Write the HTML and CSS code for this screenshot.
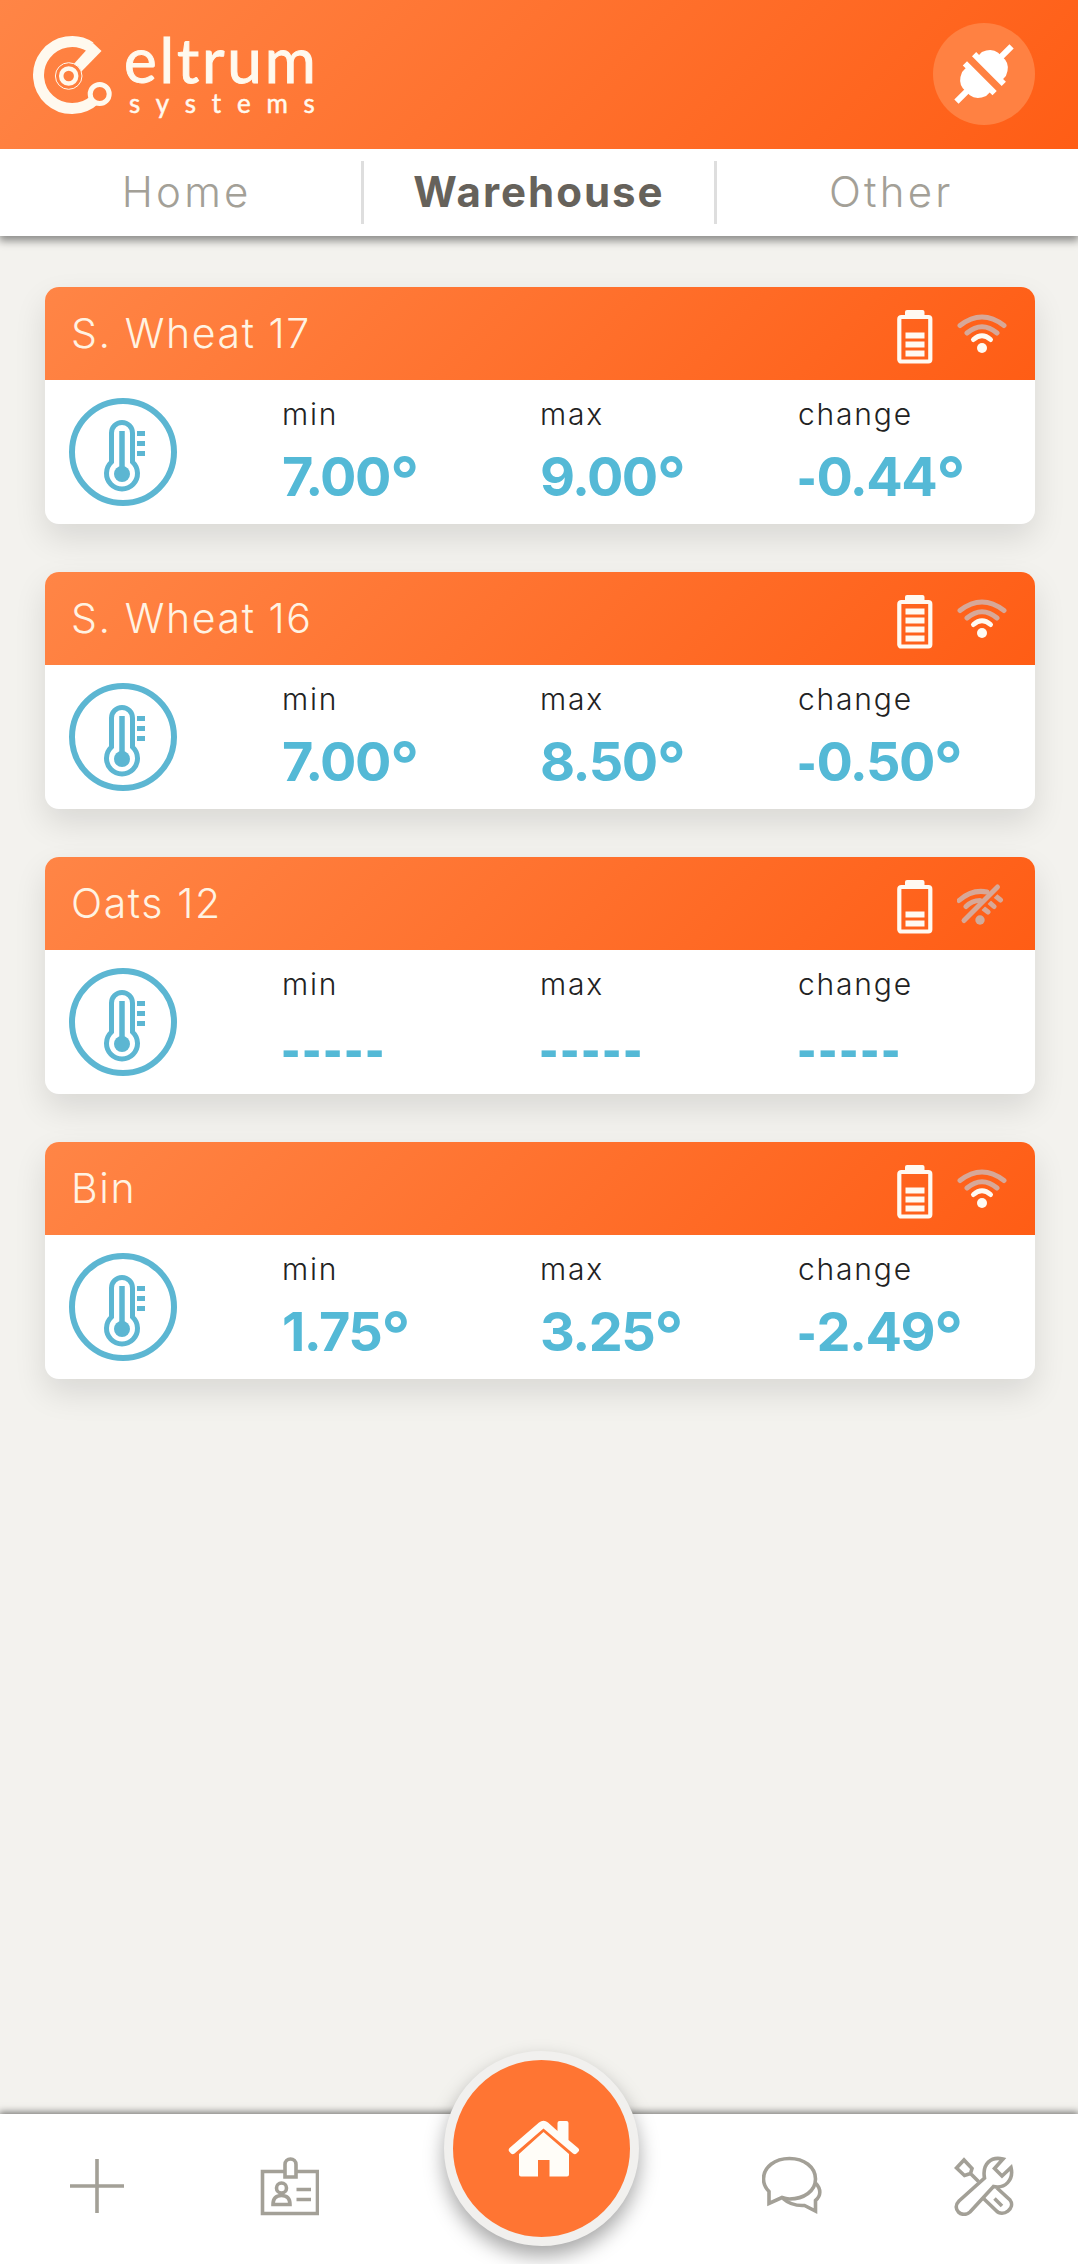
FILE: index.html
```html
<!DOCTYPE html>
<html lang="en">
<head>
  <meta charset="UTF-8" />
  <meta name="viewport" content="width=device-width, initial-scale=1.0" />
  <title>Eltrum Systems - Warehouse</title>
  <link rel="stylesheet" href="styles.css">
</head>
<body>
  <!-- shared icons -->
  <svg class="sprite" width="0" height="0">
    <symbol id="thermometer" viewBox="0 0 108 108">
      <circle cx="54" cy="54" r="51" fill="none" stroke="currentColor" stroke-width="6"/>
      <path d="M42.5 64V35a10.500 10.500 0 0 1 21 0V64A15.500 15.500 0 1 1 42.500 64Z" fill="none" stroke="currentColor" stroke-width="5"/>
      <path d="M53 33V74" stroke="currentColor" stroke-width="5.500"/>
      <circle cx="53" cy="76" r="8" fill="currentColor"/>
      <path d="M68 35.500h8M68 45.500h8M68 55.500h8" stroke="currentColor" stroke-width="5"/>
    </symbol>
    <symbol id="battery" viewBox="0 0 36 54">
      <rect x="2.300" y="7" width="31" height="44.500" rx="2" fill="none" stroke="currentColor" stroke-width="4.200"/>
      <path d="M8 6V2q0-2 2-2h15.500q2 0 2 2v4z" fill="currentColor"/>
      <path d="M8.500 43.500h19M8.500 34.500h19" stroke="currentColor" stroke-width="6"/>
    </symbol>
    <symbol id="wifi" viewBox="0 0 50 40">
      <g fill="none" stroke-width="5" stroke-linecap="round">
        <path class="wifi-weak" d="M3 11.500Q25-5.500 47 11.500M10 19Q25 6.500 40 19"/>
        <path d="M16.500 25.500Q25 18 33.500 25.500" stroke="currentColor"/>
      </g>
      <circle cx="25" cy="34" r="5" fill="currentColor"/>
    </symbol>
    <symbol id="wifi-off" viewBox="0 0 50 42">
      <g class="wifi-weak" fill="none" stroke-width="5" stroke-linecap="round">
        <path d="M2 17.500Q15 6 30 9M38.500 13L43.500 17M9 23.500Q15 17.500 23 17.500M32.500 19.500L37 23.500M26.500 25.500L31 29"/>
        <path class="wifi-gap" d="M9.500 40L43.500 6" stroke-width="3"/>
        <path d="M7 37.500L40.500 4"/>
      </g>
      <circle class="wifi-dot" cx="23" cy="37" r="4.700"/>
    </symbol>
  </svg>

  <header class="header">
    <div class="logo">
      <svg class="logo-mark" viewBox="0 0 80 80" fill="none" stroke="#fff9ee">
        <path d="M57.400 12A33.500 33.500 0 1 0 62 64.400" stroke-width="11"/>
        <path d="M53 15.500L60 8 68.500 16 46.500 38.500 39 31Z" fill="#fff9ee" stroke="none"/>
        <circle cx="35.700" cy="41" r="13.300" fill="#ff7f3f" stroke-width="1"/>
        <circle cx="35.700" cy="41" r="7.500" stroke-width="4.500"/>
        <circle cx="66.700" cy="59" r="9.500" fill="#ff7f3f" stroke-width="5"/>
      </svg>
      <div class="logo-text">
        <span class="logo-name">eltrum</span>
        <span class="logo-sub">systems</span>
      </div>
    </div>
    <button class="connection">
      <svg width="64" height="64" viewBox="-32 -32 64 64">
        <g transform="rotate(-45)" fill="#fff">
          <path d="M-39-3H-23V3H-39zM23-3H39V3H23z"/>
          <path d="M-3-21V21H-9V17H-14Q-24 13-25 5V-5Q-24-13-14-17H-9V-21z"/>
          <path d="M4-21V21H10V17H14Q24 13 25 5V-5Q24-13 14-17H10V-21z"/>
        </g>
      </svg>
    </button>
  </header>

  <nav class="tabs">
    <a class="tab">Home</a>
    <a class="tab active">Warehouse</a>
    <a class="tab">Other</a>
  </nav>

  <main class="cards">
    <section class="card">
      <div class="card-header">
        <h2>S. Wheat 17</h2>
        <svg class="battery" viewBox="0 0 36 54"><use href="#battery"/><path d="M8.500 25.500h19" stroke="currentColor" stroke-width="6"/></svg>
        <svg class="wifi"><use href="#wifi"/></svg>
      </div>
      <div class="card-body">
        <svg class="thermometer"><use href="#thermometer"/></svg>
        <div class="reading"><span class="label">min</span><span class="value">7.00<span class="deg">°</span></span></div>
        <div class="reading"><span class="label">max</span><span class="value">9.00<span class="deg">°</span></span></div>
        <div class="reading"><span class="label">change</span><span class="value"><span class="minus">-</span>0.44<span class="deg">°</span></span></div>
      </div>
    </section>

    <section class="card">
      <div class="card-header">
        <h2>S. Wheat 16</h2>
        <svg class="battery" viewBox="0 0 36 54"><use href="#battery"/><path d="M8.500 25.500h19M8.500 16.500h19" stroke="currentColor" stroke-width="6"/></svg>
        <svg class="wifi"><use href="#wifi"/></svg>
      </div>
      <div class="card-body">
        <svg class="thermometer"><use href="#thermometer"/></svg>
        <div class="reading"><span class="label">min</span><span class="value">7.00<span class="deg">°</span></span></div>
        <div class="reading"><span class="label">max</span><span class="value">8.50<span class="deg">°</span></span></div>
        <div class="reading"><span class="label">change</span><span class="value"><span class="minus">-</span>0.50<span class="deg">°</span></span></div>
      </div>
    </section>

    <section class="card">
      <div class="card-header">
        <h2>Oats 12</h2>
        <svg class="battery" viewBox="0 0 36 54"><use href="#battery"/></svg>
        <svg class="wifi off"><use href="#wifi-off"/></svg>
      </div>
      <div class="card-body">
        <svg class="thermometer"><use href="#thermometer"/></svg>
        <div class="reading"><span class="label">min</span><span class="value empty">-----</span></div>
        <div class="reading"><span class="label">max</span><span class="value empty">-----</span></div>
        <div class="reading"><span class="label">change</span><span class="value empty">-----</span></div>
      </div>
    </section>

    <section class="card">
      <div class="card-header">
        <h2>Bin</h2>
        <svg class="battery" viewBox="0 0 36 54"><use href="#battery"/><path d="M8.500 25.500h19" stroke="currentColor" stroke-width="6"/></svg>
        <svg class="wifi"><use href="#wifi"/></svg>
      </div>
      <div class="card-body">
        <svg class="thermometer"><use href="#thermometer"/></svg>
        <div class="reading"><span class="label">min</span><span class="value">1.75<span class="deg">°</span></span></div>
        <div class="reading"><span class="label">max</span><span class="value">3.25<span class="deg">°</span></span></div>
        <div class="reading"><span class="label">change</span><span class="value"><span class="minus">-</span>2.49<span class="deg">°</span></span></div>
      </div>
    </section>
  </main>

  <footer class="bottom-bar">
    <a class="bar-item">
      <svg viewBox="0 0 60 60"><path d="M30 3V57M3 30H57"/></svg>
    </a>
    <a class="bar-item">
      <svg viewBox="0 0 60 60">
        <path d="M25 15.500H3.500V57.500H58.500V15.500H37"/>
        <path d="M26 21V8.500a5.500 5.500 0 0 1 11 0V21Z"/>
        <circle cx="22.500" cy="32" r="5"/>
        <path d="M14 48.500q0-9 8.500-9t8.500 9ZM37.500 33.500H52M37.500 43.500H52"/>
      </svg>
    </a>
    <a class="home-button">
      <svg width="72" height="58" viewBox="0 0 72 58" fill="#fffdf8">
        <path d="M1.500 28L31 2.500Q35.500-1 40 2.500L49.500 11V3q0-2 2-2h7q2 0 2 2V20L70 28q2 2 .500 3.500l-2 2q-1.500 1.500-3.500 0L35.500 8.500 6.500 33.500q-2 1.500-3.500 0l-1.800-2q-1.200-1.700.300-3.500z"/>
        <path d="M35.500 12L61 34V54.500q0 2-2 2H41.500V40H30V56.500H13q-2 0-2-2V34z"/>
      </svg>
    </a>
    <a class="bar-item">
      <svg viewBox="0 0 60 60">
        <path d="M7 35.500Q1.500 30 1.500 23C1.500 11 13 2.500 27.500 2.500S53.500 11 53.500 23 42 43 27.500 43Q24 43 20 41.500L7 47.500Z"/>
        <path d="M53.500 27C59.500 33 59 40 53.500 44.500V55L42.500 49.500C33 50 27 48 21 42.500"/>
      </svg>
    </a>
    <a class="bar-item">
      <svg viewBox="0 0 60 60">
        <path d="M2.500 12L10 4 18 12.500 16.500 17.500 10.500 19.500ZM16 17L24.500 25.500"/>
        <path d="M49 3C37 0 28 8 30.500 22L5 45C-3 53 8 63 16 56L39.500 30.500C51 33 60 24 57 11.500L48 20 40.500 12.500Z"/>
        <path d="M29 42L42 54.500C49 62 62 52 56 44L43 32M40.500 42.500L48 50"/>
      </svg>
    </a>
  </footer>
</body>
</html>
```
FILE: styles.css
```css
* {
  box-sizing: border-box;
}

body {
  margin: 0;
  height: 2264px;
  display: flex;
  flex-direction: column;
  overflow: hidden;
  background: #f3f2ee;
  font-family: Inter, "Open Sans", sans-serif;
}

.sprite {
  position: absolute;
}

.header {
  flex: none;
  height: 149px;
  padding: 0 43px 2px 33px;
  display: flex;
  align-items: center;
  justify-content: space-between;
  background: linear-gradient(135deg, #ff8546, #ff5d15);
}

.logo {
  display: flex;
  align-items: center;
}

.logo-mark {
  width: 80px;
  height: 80px;
  margin-top: 3px;
}

.logo-text {
  display: flex;
  flex-direction: column;
  padding-left: 11px;
  font-family: Lato, sans-serif;
  color: #fff9ee;
}

.logo-name {
  font-size: 62px;
  line-height: 58px;
  letter-spacing: 2.8px;
  -webkit-text-stroke: 1px #fff9ee;
}

.logo-sub {
  padding-left: 5px;
  font-size: 26px;
  line-height: 30px;
  letter-spacing: 15.8px;
  -webkit-text-stroke: 0.5px #fff9ee;
}

.connection {
  width: 102px;
  height: 102px;
  padding: 0;
  border: none;
  border-radius: 50%;
  background: #ff8142;
  display: flex;
  align-items: center;
  justify-content: center;
}

.tabs {
  flex: none;
  height: 87px;
  padding: 12px 12px;
  display: flex;
  background: #fff;
  box-shadow: 0 4px 8px 1px rgba(0, 0, 0, 0.42);
  clip-path: inset(0 0 -20px 0);
}

.tab {
  flex: 1;
  padding-bottom: 2px;
  display: flex;
  align-items: center;
  justify-content: center;
  border-left: 3px solid #dedede;
  font-size: 42px;
  font-weight: 300;
  letter-spacing: 3.2px;
  color: #a3a097;
}

.tab:first-child {
  border-left: none;
}

.tab.active {
  font-weight: 700;
  letter-spacing: 2px;
  color: #66625b;
}

.cards {
  flex: 1;
  padding: 51px 43px 0 45px;
  display: flex;
  flex-direction: column;
  gap: 48px;
}

.card {
  height: 237px;
  border-radius: 14px;
  overflow: hidden;
  background: #fff;
  box-shadow: 0 14px 32px rgba(0, 0, 0, 0.11);
}

.card-header {
  height: 93px;
  padding: 0 28px 0 26px;
  display: flex;
  align-items: center;
  background: linear-gradient(135deg, #ff8546, #ff5d15);
  color: #fffaf2;
}

.card-header h2 {
  flex: 1;
  margin: 0;
  padding-bottom: 2px;
  font-size: 41px;
  font-weight: 300;
  letter-spacing: 1.6px;
  color: #fff3e3;
}

.battery {
  width: 36px;
  height: 54px;
  margin: 7px 24px 0 0;
}

.wifi {
  width: 50px;
  height: 40px;
}

.wifi.off {
  height: 42px;
}

.wifi-weak {
  stroke: #d7a898;
}

.off .wifi-weak {
  stroke: #cfac9d;
}

.wifi-gap {
  stroke: #ff6019;
}

.wifi-dot {
  fill: #d0ab9c;
}

.card-body {
  height: 144px;
  padding-left: 24px;
  display: flex;
}

.thermometer {
  flex: none;
  width: 108px;
  height: 108px;
  margin: 18px 105px 0 0;
  color: #5cb6d2;
}

.reading {
  flex: none;
  width: 258px;
  padding-top: 14px;
  display: flex;
  flex-direction: column;
}

.label {
  font-size: 30px;
  line-height: 40px;
  font-weight: 300;
  letter-spacing: 1.8px;
  color: #222;
}

.value {
  font-size: 54px;
  line-height: 64px;
  padding-top: 11px;
  font-weight: 700;
  letter-spacing: -1.5px;
  color: #54b9d6;
}

/* Inter's hyphen is too wide here */
.value.empty,
.minus {
  font-family: "Open Sans", sans-serif;
  letter-spacing: 3.6px;
}

.minus {
  line-height: 0;
  letter-spacing: 1px;
}

.deg {
  font-size: 64px;
  line-height: 0;
  font-weight: 600;
  vertical-align: -7px;
}

.bottom-bar {
  flex: none;
  height: 150px;
  padding: 0 64px 0 67px;
  display: flex;
  justify-content: space-between;
  background: #fff;
  box-shadow: 0 -1px 7px 1px rgba(0, 0, 0, 0.5);
}

.bar-item {
  width: 60px;
  padding-top: 42px;
}

.bar-item svg {
  display: block;
  width: 60px;
  height: 60px;
  fill: none;
  stroke: #a3a097;
  stroke-width: 3.6;
}

.home-button {
  width: 195px;
  height: 195px;
  margin: -63px -9px 0 -7px;
  border: 9px solid #f1f0ee;
  border-radius: 50%;
  background: #ff7533;
  box-shadow: 0 10px 20px rgba(0, 0, 0, 0.35);
  display: flex;
  align-items: center;
  justify-content: center;
}

.home-button svg {
  margin-left: 4px;
}
```
